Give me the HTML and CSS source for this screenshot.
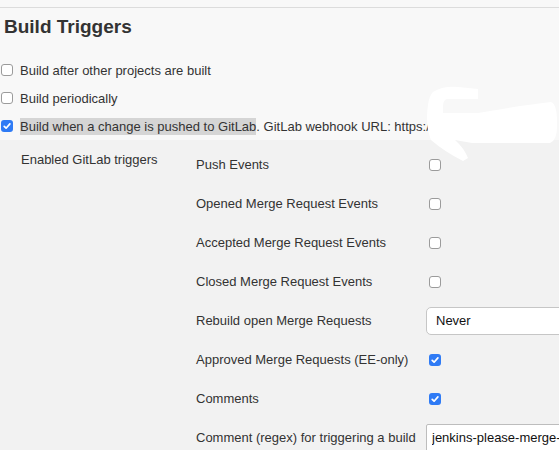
FILE: index.html
```html
<!DOCTYPE html>
<html>
<head>
<meta charset="utf-8">
<link rel="stylesheet" href="styles.css">
</head>
<body>
<div class="page">
  <div class="topbar"></div>
  <h2 class="title">Build Triggers</h2>
  <div class="triggers">
    <label class="opt"><span class="cb"></span><span>Build after other projects are built</span></label>
    <label class="opt"><span class="cb"></span><span>Build periodically</span></label>
    <label class="opt"><span class="cb checked"><svg viewBox="0 0 12 12" width="12" height="12"><path d="M3.2 6.3 L5.1 8.2 L8.9 3.9" fill="none" stroke="#fff" stroke-width="1.7" stroke-linecap="round" stroke-linejoin="round"/></svg></span><span class="hl">Build when a change is pushed to GitLab</span><span>. GitLab webhook URL: https://</span></label>
  </div>
  <div class="nested">
    <div class="nested-label">Enabled GitLab triggers</div>
    <div class="fields">
      <div class="field"><span class="fname">Push Events</span><span class="fctl"><span class="cb"></span></span></div>
      <div class="field"><span class="fname">Opened Merge Request Events</span><span class="fctl"><span class="cb"></span></span></div>
      <div class="field"><span class="fname">Accepted Merge Request Events</span><span class="fctl"><span class="cb"></span></span></div>
      <div class="field"><span class="fname">Closed Merge Request Events</span><span class="fctl"><span class="cb"></span></span></div>
      <div class="field"><span class="fname">Rebuild open Merge Requests</span><span class="fctl wide"><span class="select">Never</span></span></div>
      <div class="field"><span class="fname">Approved Merge Requests (EE-only)</span><span class="fctl"><span class="cb checked"><svg viewBox="0 0 12 12" width="12" height="12"><path d="M3.2 6.3 L5.1 8.2 L8.9 3.9" fill="none" stroke="#fff" stroke-width="1.7" stroke-linecap="round" stroke-linejoin="round"/></svg></span></span></div>
      <div class="field"><span class="fname">Comments</span><span class="fctl"><span class="cb checked"><svg viewBox="0 0 12 12" width="12" height="12"><path d="M3.2 6.3 L5.1 8.2 L8.9 3.9" fill="none" stroke="#fff" stroke-width="1.7" stroke-linecap="round" stroke-linejoin="round"/></svg></span></span></div>
      <div class="field"><span class="fname">Comment (regex) for triggering a build</span><span class="fctl wide"><input class="text" type="text" value="jenkins-please-merge-request"></span></div>
    </div>
  </div>
  <svg class="redact" width="559" height="450" viewBox="0 0 559 450">
    <path d="M433 92 Q442 86 458 87 L478 89 L478 99 L447 99 Q443 100 443 106 L443 113 L478 113 L520 106 L551 102 Q557 104 557 122 Q558 140 550 143 L472 143 L455 140 Q464 148 468 158 L463 161 Q445 152 431 140 Q425 125 428 105 Q429 96 433 92 Z" fill="#fff"/>
  </svg>
</div>
</body>
</html>
```
FILE: styles.css
```css
html, body {
  margin: 0;
  padding: 0;
  overflow: hidden;
}
body {
  background: #f8f8f8;
  font-family: "Liberation Sans", Arial, Helvetica, sans-serif;
  font-size: 13px;
  color: #333;
}
.page {
  position: relative;
  width: 559px;
  height: 450px;
  overflow: hidden;
}
.topbar {
  height: 7px;
  border-bottom: 1px solid #dcdcdc;
}
.title {
  margin: 8px 0 18px 4px;
  font-size: 19px;
  line-height: 22px;
  font-weight: bold;
  color: #333;
}
.triggers {
  padding-left: 1px;
  display: flex;
  flex-direction: column;
}
.opt {
  display: flex;
  align-items: center;
  height: 28px;
  white-space: nowrap;
  gap: 7px;
}
.opt .hl + span {
  margin-left: -7px;
}
.hl {
  background: #d5d5d5;
  padding: 1px 0;
}
.cb {
  flex: none;
  display: inline-block;
  box-sizing: border-box;
  width: 12px;
  height: 12px;
  border: 1px solid #9b9b9b;
  border-radius: 3px;
  background: #fff;
}
.cb.checked {
  border: none;
  background: #2f7bf5;
}
.cb svg {
  display: block;
}
.nested {
  background: #f2f2f2;
  display: flex;
  padding: 5px 0 0 21px;
  height: 400px;
}
.nested-label {
  width: 175px;
  flex: none;
  padding-top: 7px;
  line-height: 15px;
}
.fields {
  display: flex;
  flex-direction: column;
}
.field {
  display: flex;
  align-items: center;
  height: 39px;
  white-space: nowrap;
}
.fname {
  width: 230px;
  flex: none;
}
.fctl {
  display: flex;
  align-items: center;
  padding-left: 3px;
}
.fctl.wide {
  padding-left: 0;
}
.select {
  box-sizing: border-box;
  width: 200px;
  height: 28px;
  border: 1px solid #c6c6c6;
  border-radius: 5px;
  background: #fff;
  padding-left: 9px;
  display: flex;
  align-items: center;
  color: #111;
}
.text {
  box-sizing: border-box;
  width: 200px;
  height: 28px;
  margin: 0;
  border: 1px solid #bdbdbd;
  border-radius: 2px;
  background: #fff;
  padding: 0 5px;
  font-family: "Liberation Sans", Arial, Helvetica, sans-serif;
  font-size: 13px;
  color: #111;
  outline: none;
}
.redact {
  position: absolute;
  left: 0;
  top: 0;
  pointer-events: none;
}
```
